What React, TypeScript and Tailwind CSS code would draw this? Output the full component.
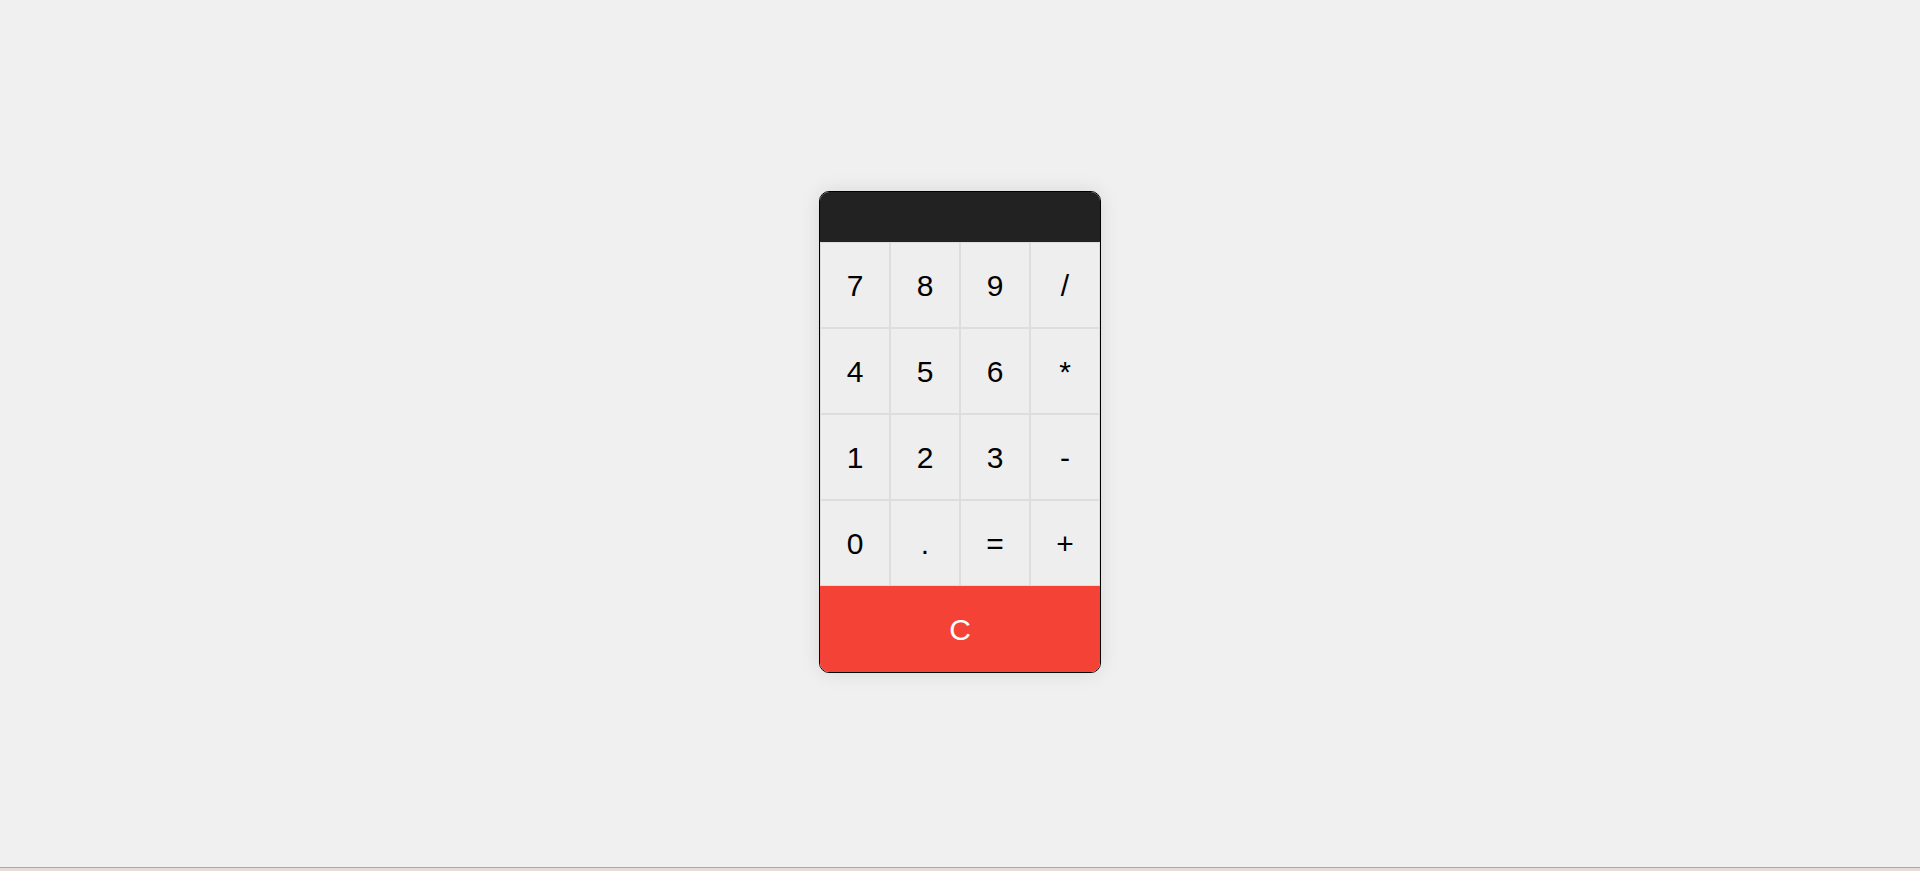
import React from "react";

const keys = ["7", "8", "9", "/", "4", "5", "6", "*", "1", "2", "3", "-", "0", ".", "=", "+"];

export default function App() {
  return (
    <div className="flex h-screen flex-col bg-[#f0f0f0] font-['Liberation_Sans',Arial,sans-serif]">
      <main className="flex flex-1 items-center justify-center pb-[3px]">
        {/* Calculator */}
        <div className="w-[282px] overflow-hidden rounded-[10px] border border-black shadow-[0_0_20px_rgba(0,0,0,0.1)]">
          <div className="h-[50px] bg-[#222]"></div>
          <div className="grid grid-cols-4">
            {keys.map((k) => (
              <button
                key={k}
                className="flex h-[86px] items-center justify-center border border-[#ddd] bg-[#eee] text-[30px] text-black"
              >
                {k}
              </button>
            ))}
            <button className="col-span-4 flex h-[86px] items-center justify-center bg-[#f44336] text-[30px] text-white">
              C
            </button>
          </div>
        </div>
      </main>
      <div className="h-[4px] border-t border-[#a9a9a9] bg-[#e6dcd9]"></div>
    </div>
  );
}
